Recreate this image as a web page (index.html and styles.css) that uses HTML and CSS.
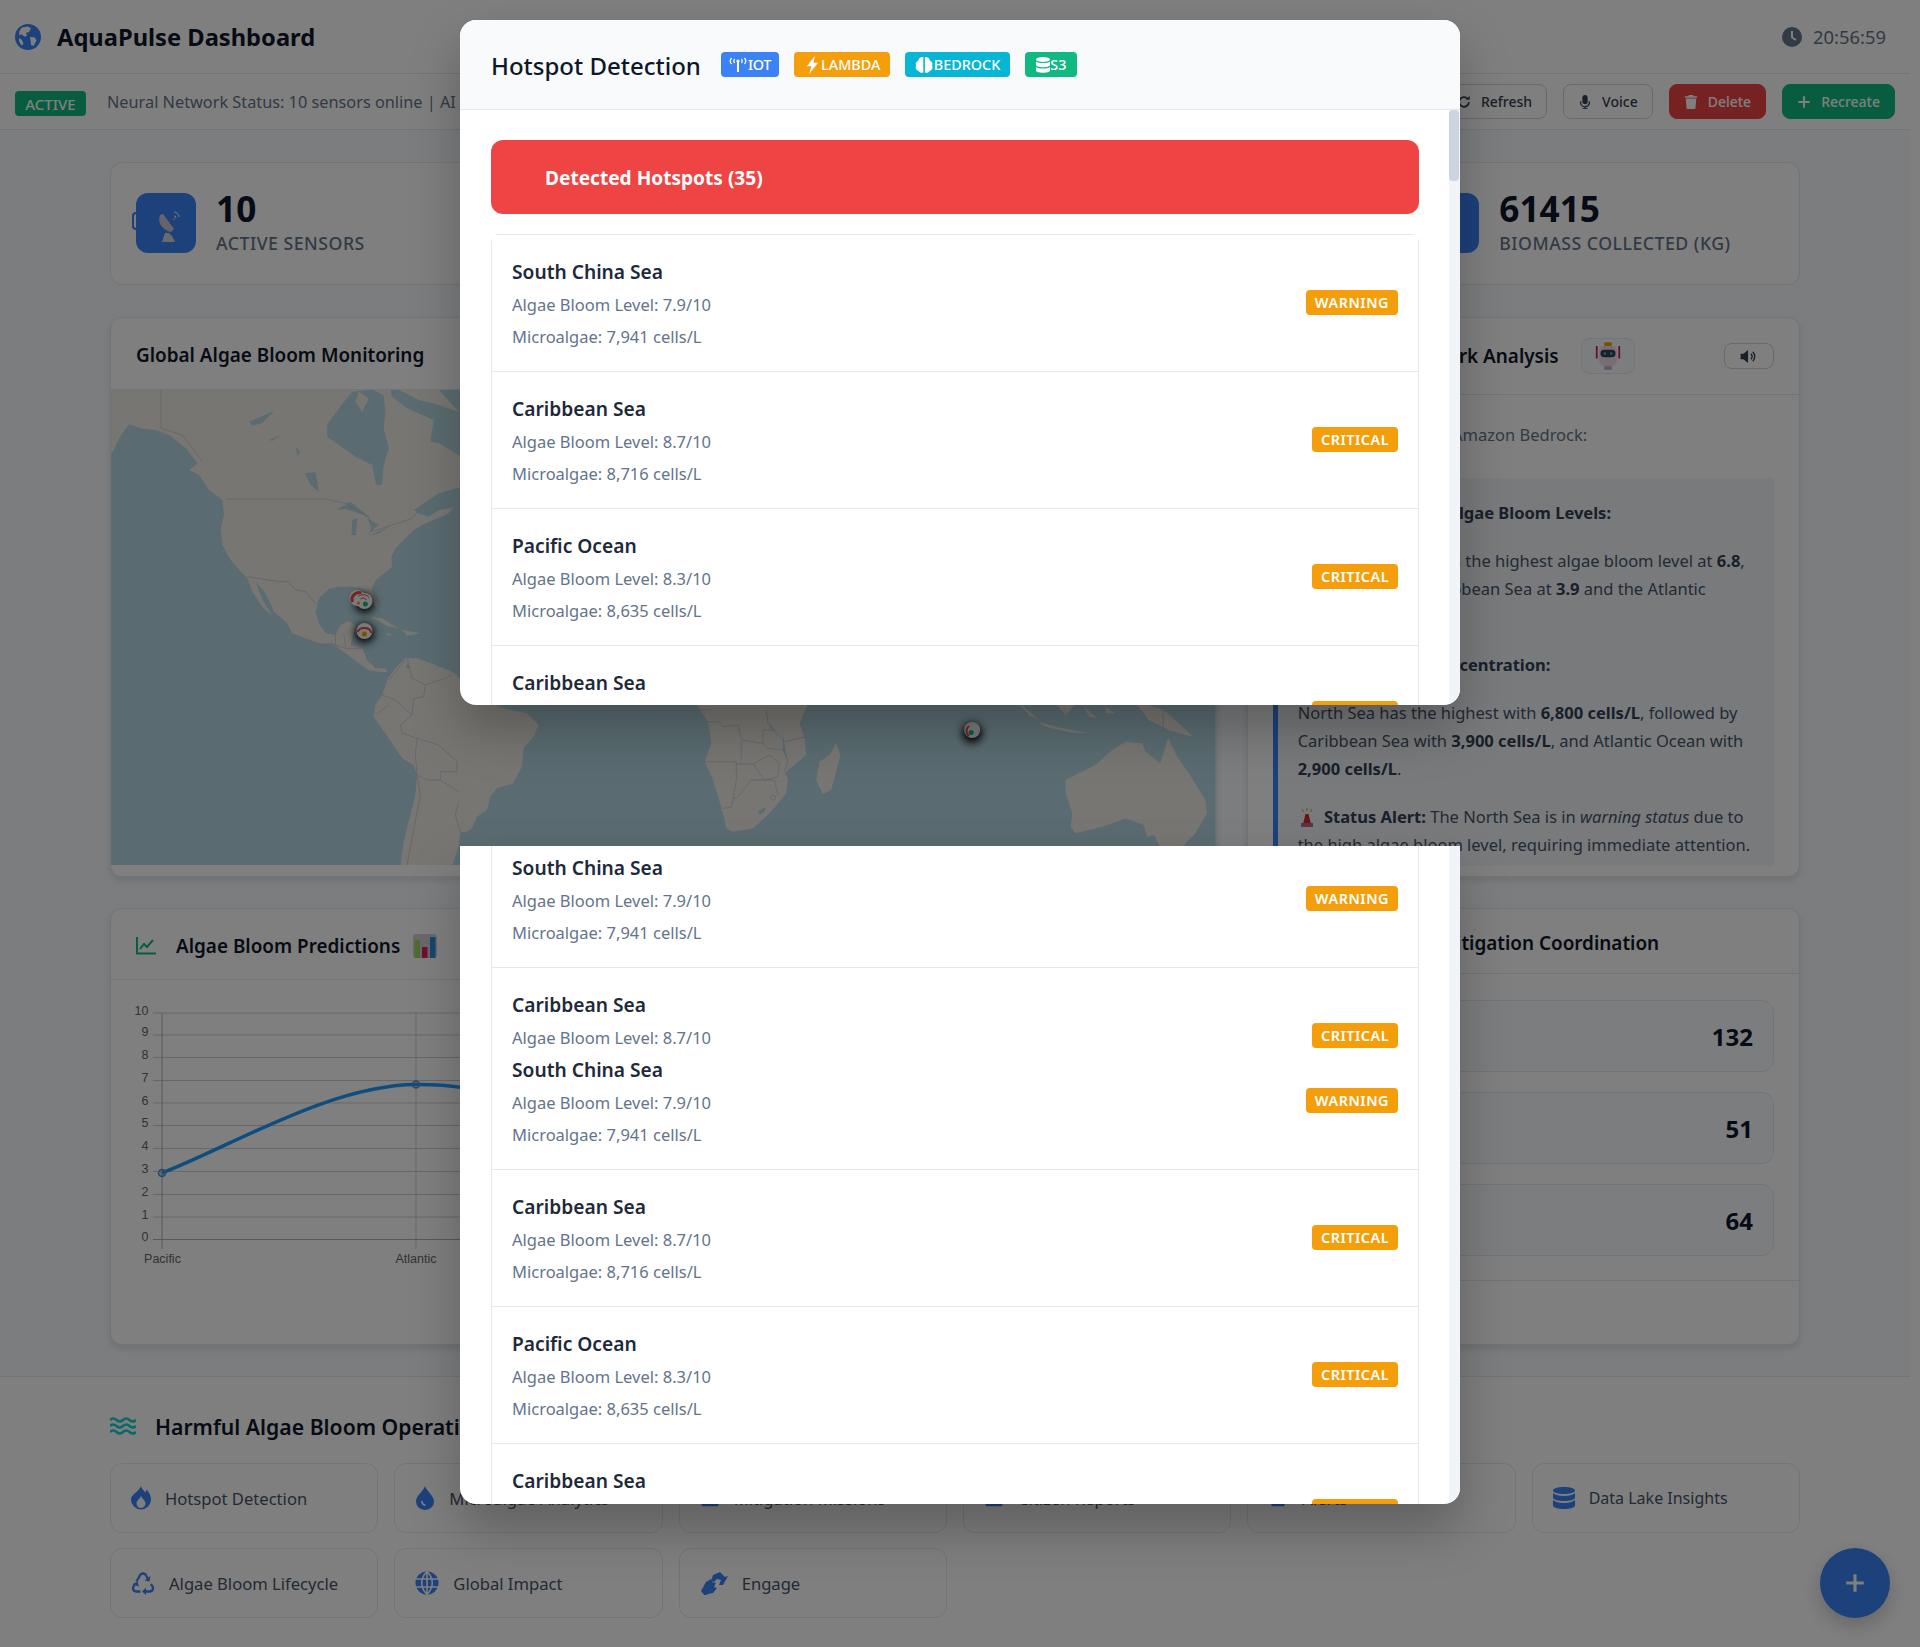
FILE: index.html
```html
<!DOCTYPE html>
<html lang="en">
<head>
<meta charset="utf-8">
<title>AquaPulse Dashboard</title>
<link rel="stylesheet" href="styles.css">
</head>
<body>
<div class="page">
  <header class="topbar">
    <div class="brand">
      <svg class="brand-icon" viewBox="0 0 26 26"><circle cx="13" cy="13" r="13" fill="#3b82f6"/><path d="M7 3.500l6-1 3 2-2 3.500-3 1 1 3-3 .5-2-2-3 .5 .5-4zM15 13l5 .5 1.500 3-3 5.500-2.500-1-.5-4.500zM4 14l3 2 1.500 4-2 1.500-2.500-4z" fill="#fff"/></svg>
      <h1>AquaPulse Dashboard</h1>
    </div>
    <div class="clock">
      <svg class="clock-icon" viewBox="0 0 20 20"><circle cx="10" cy="10" r="10" fill="#64748b"/><path d="M10 4v6.500l4 2.500" fill="none" stroke="#fff" stroke-width="2"/></svg>
      <span>20:56:59</span>
    </div>
  </header>

  <div class="statusbar">
    <span class="pill">ACTIVE</span>
    <span class="status-text">Neural Network Status: 10 sensors online | AI Analysis Active</span>
    <div class="actions">
      <button class="btn"><svg class="ico14" viewBox="0 0 16 16"><path d="M13.500 8a5.500 5.500 0 1 1-1.700-4" fill="none" stroke="#334155" stroke-width="2"/><path d="M14.500 1v4.500H10z" fill="#334155"/></svg>Refresh</button>
      <button class="btn"><svg class="ico14" viewBox="0 0 16 16"><rect x="5" y="0" width="6" height="10.500" rx="3" fill="#334155"/><path d="M3 7v1.500a5 5 0 0 0 10 0V7M8 13.500V16M5 16h6" fill="none" stroke="#334155" stroke-width="1.500"/></svg>Voice</button>
      <button class="btn btn-red"><svg class="ico14" viewBox="0 0 16 16"><path d="M5.500 0h5l.5 1.500h4V3H1V1.500h4zM2 4h12l-1 12H3z" fill="#fff"/></svg>Delete</button>
      <button class="btn btn-green"><svg class="ico14" viewBox="0 0 16 16"><path d="M8 1.500v13M1.500 8h13" stroke="#fff" stroke-width="2.200"/></svg>Recreate</button>
    </div>
  </div>

  <main class="main">
    <section class="stats">
      <div class="stat">
        <div class="stat-icon stat-icon-first">
          <svg viewBox="0 0 30 36" class="dish"><path d="M5 6c-3 7 2 15 11 17l3-3L8 5z" fill="#cfc7d6"/><path d="M10 24l-3 9h13l-3-6-3-3z" fill="#d8d2dc"/><path d="M19 3a5 5 0 0 1 5 5M19 7a2 2 0 0 1 2 2" fill="none" stroke="#fff" stroke-width="1"/><circle cx="19" cy="10" r="1.500" fill="#94a3b8"/></svg>
        </div>
        <div class="stat-text"><div class="stat-value">10</div><div class="stat-label">Active Sensors</div></div>
      </div>
      <div class="stat">
        <div class="stat-icon"></div>
        <div class="stat-text"><div class="stat-value">7.2</div><div class="stat-label">Avg Bloom Level</div></div>
      </div>
      <div class="stat">
        <div class="stat-icon"></div>
        <div class="stat-text"><div class="stat-value">35</div><div class="stat-label">Hotspots</div></div>
      </div>
      <div class="stat">
        <div class="stat-icon"></div>
        <div class="stat-text"><div class="stat-value">61415</div><div class="stat-label">Biomass Collected (kg)</div></div>
      </div>
    </section>

    <section class="grid-row row-top">
      <article class="card">
        <div class="card-head head-map"><h2>Global Algae Bloom Monitoring</h2></div>
        <svg class="map" viewBox="110 390 1107 475" preserveAspectRatio="none">
          <defs>
            <filter id="mk" x="-100%" y="-100%" width="300%" height="300%"><feGaussianBlur stdDeviation="4"/></filter>
          </defs>
          <rect x="110" y="390" width="1107" height="475" fill="#b5d8e2"/>
          <g transform="translate(105 385) scale(.33333)">
            <path class="land" d="M15 14L1070 14L1070 300L1050 360L1030 385L985 405L950 420L925 435L900 460L870 490L858 515L860 545L830 570L810 585L798 615L815 650L815 668L800 655L785 625L770 610L740 605L700 605L670 612L640 640L630 680L640 715L660 745L690 750L705 720L730 708L750 722L735 780L770 790L785 825L810 850L840 850L845 862L820 860L790 855L760 835L720 805L680 775L640 775L600 760L560 745L545 715L505 680L480 625L450 590L468 640L500 692L470 665L440 620L425 580L405 560L375 525L350 480L345 430L355 390L350 345L310 315L280 270L250 255L275 235L240 190L190 150L150 135L105 130L70 118L45 150L20 200L15 205Z"/>
            <path class="water" d="M740 20L800 14L835 30L840 80L835 130L850 190L835 240L830 300L812 300L800 240L750 215L700 180L665 155L665 120L700 70Z"/>
            <path class="water" d="M855 14L1070 14L1070 215L1000 175L975 170L985 105L950 90L905 70L860 35Z"/>
            <path class="land" d="M880 14L1000 14L1060 80L1000 60L940 45ZM760 20L790 40L770 80L750 50Z"/>
            <path class="water" d="M925 375L1000 325L1070 305L1065 360L1035 370L1000 375L970 395L940 385Z"/>
            <path class="water" d="M430 110L465 95L505 78L470 115L440 122ZM490 165L525 150L500 168ZM570 185L585 200L575 212ZM598 265L630 262L640 320L615 300ZM690 375L735 350L770 378L795 400L760 385L720 372ZM740 405L755 400L752 450L738 450ZM785 400L820 420L795 440L785 455L800 425ZM790 452L850 425L860 420L820 445Z"/>
            <path class="land" d="M795 697L830 700L880 730L850 725L815 705ZM890 735L945 745L905 752ZM845 745L865 750L845 752Z"/>
            <path class="land" d="M848 880L870 850L900 820L935 820L990 840L1040 860L1070 885L1100 930L1195 970L1265 985L1300 1020L1285 1055L1255 1090L1250 1145L1225 1195L1175 1210L1155 1235L1145 1275L1115 1295L1100 1330L1085 1340L1065 1340L1060 1385L1040 1445L885 1445L895 1370L915 1290L930 1230L935 1170L925 1140L890 1120L850 1060L805 995L810 960L830 930Z"/>
            <path class="water" d="M905 835L915 850L902 850Z"/>
            <path class="border" d="M165 14V130L230 150L290 230M360 342H660L720 355L790 395L800 440L860 420L920 400L945 370M425 575L520 590L550 590L570 615L600 620L632 658M690 750L690 780L720 790L770 790M715 745L720 785M850 885L900 825M905 820L920 880L960 900L1020 880L1040 870M960 900L955 935L925 940L920 990L885 1020L890 1045L935 1060L930 1110L935 1170L965 1185L1005 1185L1060 1220M935 1170L945 1230L905 1440M830 930L870 945L920 990M810 990L850 960M935 1060L1000 1080L1055 1130L1055 1160L1005 1160L1005 1185M1060 1250L1050 1290L1065 1340"/>
            <path class="faint" d="M18 945H820"/>
          </g>
          <g transform="translate(460 700) scale(.33333)">
            <path class="land" d="M700 0L745 65L755 130L735 185L760 240L790 340L800 385L820 395L880 385L930 340L980 280L985 235L975 220L1040 165L1035 115L1020 70L1050 0Z"/>
            <path class="land" d="M1130 130L1143 165L1115 270L1090 282L1070 240L1080 185L1110 165Z"/>
            <path class="border" d="M735 185H830V240L820 295L830 295L875 240L915 240L945 240L955 285M830 192L880 192L915 240L955 230L960 190L930 165L880 192M845 125V185M745 65H780L790 80L835 75L845 120L910 130L925 145L970 150L985 180L975 215M910 130V90L940 90L975 125L1040 110M920 30L925 70L945 90M790 325L815 322L820 295M720 30H760"/>
            <path class="water" d="M920 45L928 70L950 95L932 85ZM970 100L978 150L985 180L970 150ZM895 335L918 320L915 335L900 345Z"/>
            <circle class="border" cx="941" cy="293" r="7"/>
          </g>
          <g transform="translate(850 700) scale(.33333)">
            <path class="land" d="M650 240L690 220L740 195L790 150L830 125L880 130L890 155L935 190L958 115L985 170L1020 220L1070 300L1075 340L1040 400L1000 440L935 440L915 405L895 410L885 375L830 355L760 380L680 400L665 380L670 340L650 280Z"/>
            <path class="land" d="M565 65L640 85L720 100L660 97L590 80ZM500 0L570 60L540 45ZM610 0H690L650 45ZM705 20L745 55L720 50ZM770 20L800 40H770ZM850 0L945 30L1035 112L960 90L900 60L870 20Z"/>
            <path class="border" d="M943 28V95"/>
          </g>
          <g>
            <circle class="mk-shadow" cx="364" cy="603" r="10" filter="url(#mk)"/>
            <circle class="mk" cx="357" cy="598" r="8"/>
            <path class="mk-arc" d="M352 602a7 7 0 0 1 9-9" stroke-width="3"/>
            <circle class="mk" cx="364" cy="601" r="8"/>
            <path class="mk-arc" d="M358 596a8 8 0 0 1 11 2M360 599a4 4 0 0 1 6 1" stroke-width="1"/>
            <circle cx="365" cy="604" r="2.500" fill="#10b981"/>
            <circle cx="358" cy="603" r="1.500" fill="#f59e0b"/>

            <circle class="mk-shadow" cx="364" cy="633" r="10" filter="url(#mk)"/>
            <circle class="mk" cx="364" cy="631" r="8"/>
            <path class="mk-arc" d="M357 632a7 7 0 0 1 7-4a7 7 0 0 1 7 5" stroke-width="2"/>
            <circle cx="364" cy="634" r="2.500" fill="#f59e0b"/>

            <circle class="mk-shadow" cx="973" cy="733" r="10" filter="url(#mk)"/>
            <circle class="mk" cx="973" cy="730" r="8"/>
            <path class="mk-arc" d="M970 726a6 6 0 0 0 0 10" stroke-width="2"/>
            <circle cx="972" cy="732.500" r="2.500" fill="#10b981"/>
          </g>
        </svg>
      </article>

      <article class="card">
        <div class="card-head head-ai">
          <svg class="ico22 ico-ai" viewBox="0 0 24 24"><circle cx="12" cy="12" r="10" fill="#3b82f6"/></svg>
          <h2>Neural Network Analysis</h2>
          <span class="robot">
            <svg viewBox="0 0 24 24"><path d="M3 4v10M21 4v10" stroke="#e11d48" stroke-width="1.500"/><rect x="9" y="1" width="6" height="3" fill="#f59e0b"/><rect x="5" y="4" width="14" height="16" rx="4" fill="#efdde8"/><rect x="6" y="7" width="12" height="6" rx="3" fill="#334155"/><circle cx="9.500" cy="10" r="1" fill="#38bdf8"/><circle cx="14.500" cy="10" r="1" fill="#38bdf8"/><rect x="9" y="20" width="6" height="3" fill="#c9a8bc"/></svg>
          </span>
          <button class="sound"><svg viewBox="0 0 20 16"><path d="M1 5h3l5-4v14l-5-4H1z" fill="#334155"/><path d="M12 5a4 4 0 0 1 0 6M14 3a7 7 0 0 1 0 10" fill="none" stroke="#334155" stroke-width="1.500"/></svg></button>
        </div>
        <div class="ai-body">
          <p class="ai-intro">Latest AI analysis from Amazon Bedrock:</p>
          <div class="ai-panel">
            <p><strong>Highest Recorded Algae Bloom Levels:</strong></p>
            <p>The North Sea shows the highest algae bloom level at <strong>6.8</strong>, followed by the Caribbean Sea at <strong>3.9</strong> and the Atlantic Ocean at <strong>2.9</strong>.</p>
            <p><strong>Microalgae Cell Concentration:</strong></p>
            <p>North Sea has the highest with <strong>6,800 cells/L</strong>, followed by Caribbean Sea with <strong>3,900 cells/L</strong>, and Atlantic Ocean with <strong>2,900 cells/L</strong>.</p>
            <p><svg class="siren" viewBox="0 0 18 20"><path d="M5 17L7.500 7h3L13 17z" fill="#dc2626"/><rect x="3" y="16" width="12" height="4" fill="#b56a8a"/><path d="M9 1v3M4 2l1.500 3M14 2l-1.500 3" stroke="#e9b949" stroke-width="1.200"/></svg> <strong>Status Alert:</strong> The North Sea is in <em>warning status</em> due to the high algae bloom level, requiring immediate attention.</p>
          </div>
        </div>
      </article>
    </section>

    <section class="grid-row row-bottom">
      <article class="card">
        <div class="card-head head-chart">
          <svg class="ico-chartline" viewBox="0 0 20 18"><path d="M1 0v16.500h19" fill="none" stroke="#10b981" stroke-width="2"/><path d="M4 12l4-5 3 3 6-7" fill="none" stroke="#10b981" stroke-width="2"/></svg>
          <h2>Algae Bloom Predictions</h2>
          <svg class="ico-bars" viewBox="0 0 24 24"><rect width="24" height="24" rx="3" fill="#d4d0d8"/><rect x="1.500" y="6" width="5.500" height="18" fill="#a3d45f"/><rect x="9" y="13" width="5.500" height="11" fill="#e11d63"/><rect x="17" y="3" width="5.500" height="21" fill="#2b8fd8"/></svg>
        </div>
        <svg class="chart" viewBox="111 979 1105 365">
          <g class="grid">
            <path d="M153 1012H1190M153 1034H1190M153 1056.500H1190M153 1079.500H1190M153 1102H1190M153 1124.500H1190M153 1147.500H1190M153 1170.500H1190M153 1193.500H1190M153 1216H1190"/>
            <path d="M416 1012V1248M670 1012V1248M924 1012V1248M1178 1012V1248"/>
            <path class="axis" d="M162 1012V1248M153 1238.500H1190"/>
          </g>
          <path class="curve" d="M162 1172C230 1146 330 1084 416 1083.500C470 1083.200 520 1096 560 1120"/>
          <circle class="pt" cx="162" cy="1172" r="3.500"/>
          <circle class="pt" cx="416" cy="1083.500" r="3.500"/>
          <g class="ylab">
            <text x="148.500" y="1014">10</text><text x="148.500" y="1035">9</text><text x="148.500" y="1058">8</text><text x="148.500" y="1081">7</text><text x="148.500" y="1103.500">6</text><text x="148.500" y="1126">5</text><text x="148.500" y="1149">4</text><text x="148.500" y="1172">3</text><text x="148.500" y="1195">2</text><text x="148.500" y="1217.500">1</text><text x="148.500" y="1240">0</text>
          </g>
          <g class="xlab"><text x="162.500" y="1262">Pacific</text><text x="416" y="1262">Atlantic</text></g>
        </svg>
      </article>

      <article class="card">
        <div class="card-head head-mit">
          <svg class="ico22 ico-mit" viewBox="0 0 24 24"><circle cx="12" cy="12" r="10" fill="#10b981"/></svg>
          <h2>Global Mitigation Coordination</h2>
        </div>
        <div class="mit-body">
          <div class="mit-row"><span>Active Missions</span><strong>132</strong></div>
          <div class="mit-row"><span>Drones Deployed</span><strong>51</strong></div>
          <div class="mit-row"><span>Areas Cleared</span><strong>64</strong></div>
        </div>
        <div class="mit-foot"></div>
      </article>
    </section>
  </main>

  <section class="ops">
    <h2 class="ops-title">
      <svg class="ico-water" viewBox="0 0 26 18"><path d="M0 3q3.200-3 6.500 0t6.500 0 6.500 0 6.500 0M0 9q3.200-3 6.500 0t6.500 0 6.500 0 6.500 0M0 15q3.200-3 6.500 0t6.500 0 6.500 0 6.500 0" fill="none" stroke="#18d0d0" stroke-width="2.600"/></svg>
      Harmful Algae Bloom Operations
    </h2>
    <div class="ops-grid">
      <a class="op"><svg class="op-ico" viewBox="0 0 20 24"><path fill-rule="evenodd" d="M10 0c.800 3.500 3 4.500 4.500 6.500.700-1 1-2 1-3 2.500 2.500 4.500 6 4.500 10a10 10 0 0 1-20 0C0 8 8 6 10 0zM10 10c-1 3-4.500 4-4.500 7.500a4.500 4.500 0 0 0 9 0C14.500 14 11 13 10 10z" fill="#3b82f6"/></svg>Hotspot Detection</a>
      <a class="op"><svg class="op-ico" viewBox="0 0 20 24"><path fill-rule="evenodd" d="M10 0c2 6 9 9.500 9 15.500a9 8.500 0 0 1-18 0C1 9.500 8 6 10 0zM6 15a5 5 0 0 0 4.500 5v-1.800A3 3 0 0 1 7.800 15z" fill="#3b82f6"/></svg>Microalgae Analytics</a>
      <a class="op"><svg class="op-ico" viewBox="0 0 24 24"><rect x="2" y="6" width="20" height="16" rx="2" fill="#3b82f6"/></svg>Mitigation Missions</a>
      <a class="op"><svg class="op-ico" viewBox="0 0 24 24"><rect x="2" y="6" width="20" height="16" rx="2" fill="#3b82f6"/></svg>Citizen Reports</a>
      <a class="op"><svg class="op-ico" viewBox="0 0 24 24"><rect x="4" y="6" width="16" height="16" rx="2" fill="#3b82f6"/></svg>Alerts</a>
      <a class="op op-tight"><svg class="op-ico op-db" viewBox="0 0 22 22"><path d="M11 0c6 0 11 1.500 11 3.500S17 7 11 7 0 5.500 0 3.500 5 0 11 0zM0 6c2 2 6 3 11 3s9-1 11-3v4.500c0 2-5 3.500-11 3.500S0 12.500 0 10.500zM0 13c2 2 6 3 11 3s9-1 11-3v5.500c0 2-5 3.500-11 3.500S0 20.500 0 18.500z" fill="#3b82f6"/></svg>Data Lake Insights</a>
      <a class="op"><svg class="op-ico op-rec" viewBox="0 0 24 24"><path d="M5.500 10.500L9.500 3.500Q12 1.500 14.500 3.500L17 8M20 13L22 16.500Q22.500 20 19 20.500H14M9.500 20.500H5Q1.500 20 2 16.500L4.500 12" fill="none" stroke="#3b82f6" stroke-width="2.300"/><path d="M19.500 5L18.500 10.500L13.500 9.500zM15 16.800L11 20.500L15 24zM1.500 13.500L6.500 10.500L8 15.500z" fill="#3b82f6"/></svg>Algae Bloom Lifecycle</a>
      <a class="op"><svg class="op-ico op-globe" viewBox="0 0 24 24"><circle cx="12" cy="12" r="11.500" fill="#3b82f6"/><path d="M0 8h24M0 16h24M12 0v24M12 .5c-7 7-7 16 0 23M12 .5c7 7 7 16 0 23" fill="none" stroke="#fff" stroke-width="1.600"/></svg>Global Impact</a>
      <a class="op"><svg class="op-ico op-hand" viewBox="0 0 28 24"><path d="M13 4l7-3 5 5 3-1-5 9h-4l2-5-4-1-3 3-3-1zM1 20l5-9 5-3 1 3 4 1-2 4 3 1-4 5-5 1-3 2z" fill="#3b82f6"/></svg>Engage</a>
    </div>
  </section>
</div>

<button class="fab"><svg viewBox="0 0 20 20"><path d="M10 2v16M2 10h16" stroke="#fff" stroke-width="2.800"/></svg></button>

<div class="overlay"></div>

<div class="modal modal-top">
  <div class="modal-head">
    <h3>Hotspot Detection</h3>
    <span class="tag tag-iot"><svg viewBox="0 0 20 14"><path d="M10 3v11" stroke="#fff" stroke-width="2"/><circle cx="10" cy="3" r="1.600" fill="#fff"/><path d="M6.500 1q-1.500 2 0 4M3.500 0q-2.500 3 0 6M13.500 1q1.500 2 0 4M16.500 0q2.500 3 0 6" fill="none" stroke="#fff" stroke-width="1.300"/></svg>IOT</span>
    <span class="tag tag-lambda"><svg viewBox="0 0 12 16"><path d="M8 0L1 9h4l-2 7 8-10H7z" fill="#fff"/></svg>LAMBDA</span>
    <span class="tag tag-bedrock"><svg viewBox="0 0 16 14"><path d="M7.300 0C4 0 3 2 3 3 1 4 0 5.500 1 7.500 0 9 1 12 3 12c1 2 3 2 4.300 1.500zM8.700 0c3.300 0 4.300 2 4.300 3 2 1 3 2.500 2 4.500 1 1.500 0 4.500-2 4.500-1 2-3 2-4.300 1.500z" fill="#fff"/></svg>BEDROCK</span>
    <span class="tag tag-s3"><svg viewBox="0 0 14 16"><ellipse cx="7" cy="2.500" rx="7" ry="2.500" fill="#fff"/><path d="M0 4.500c2 2 12 2 14 0v3.500c0 3-14 3-14 0zM0 10c2 2 12 2 14 0v3.500c0 3-14 3-14 0z" fill="#fff"/></svg>S3</span>
  </div>
  <div class="modal-body">
    <div class="banner">Detected Hotspots (35)</div>
    <div class="list list-full">
      <div class="item"><div><div class="item-name">South China Sea</div><div class="item-line">Algae Bloom Level: 7.9/10</div><div class="item-line">Microalgae: 7,941 cells/L</div></div><span class="badge">WARNING</span></div>
      <div class="item"><div><div class="item-name">Caribbean Sea</div><div class="item-line">Algae Bloom Level: 8.7/10</div><div class="item-line">Microalgae: 8,716 cells/L</div></div><span class="badge">CRITICAL</span></div>
      <div class="item"><div><div class="item-name">Pacific Ocean</div><div class="item-line">Algae Bloom Level: 8.3/10</div><div class="item-line">Microalgae: 8,635 cells/L</div></div><span class="badge">CRITICAL</span></div>
      <div class="item"><div><div class="item-name">Caribbean Sea</div><div class="item-line">Algae Bloom Level: 8.4/10</div><div class="item-line">Microalgae: 8,120 cells/L</div></div><span class="badge">CRITICAL</span></div>
    </div>
  </div>
  <div class="thumb"></div>
</div>

<div class="modal modal-low">
  <div class="low-body">
    <div class="list">
      <div class="item item-first"><div><div class="item-name">South China Sea</div><div class="item-line">Algae Bloom Level: 7.9/10</div><div class="item-line">Microalgae: 7,941 cells/L</div></div><span class="badge">WARNING</span></div>
      <div class="clip-a"><div class="item"><div><div class="item-name">Caribbean Sea</div><div class="item-line">Algae Bloom Level: 8.7/10</div><div class="item-line">Microalgae: 8,716 cells/L</div></div><span class="badge">CRITICAL</span></div></div>
      <div class="clip-b"><div class="item"><div><div class="item-name">South China Sea</div><div class="item-line">Algae Bloom Level: 7.9/10</div><div class="item-line">Microalgae: 7,941 cells/L</div></div><span class="badge">WARNING</span></div></div>
      <div class="item"><div><div class="item-name">Caribbean Sea</div><div class="item-line">Algae Bloom Level: 8.7/10</div><div class="item-line">Microalgae: 8,716 cells/L</div></div><span class="badge">CRITICAL</span></div>
      <div class="item"><div><div class="item-name">Pacific Ocean</div><div class="item-line">Algae Bloom Level: 8.3/10</div><div class="item-line">Microalgae: 8,635 cells/L</div></div><span class="badge">CRITICAL</span></div>
      <div class="item"><div><div class="item-name">Caribbean Sea</div><div class="item-line">Algae Bloom Level: 8.4/10</div><div class="item-line">Microalgae: 8,120 cells/L</div></div><span class="badge">CRITICAL</span></div>
    </div>
  </div>
</div>
</body>
</html>
```

FILE: styles.css
```css
* { box-sizing: border-box; }
html, body { margin: 0; padding: 0; }
body {
  width: 1920px;
  height: 1647px;
  overflow: hidden;
  position: relative;
  background: #ffffff;
  font-family: "Noto Sans", "Open Sans", sans-serif;
  color: #1e293b;
  font-size: 16px;
}
h1, h2, h3, p { margin: 0; }
svg { display: block; flex: none; }

.page { width: 1910px; background: #f8fafc; }

.topbar {
  height: 74px;
  background: #ffffff;
  border-bottom: 1px solid #e2e8f0;
  display: flex;
  align-items: center;
  justify-content: space-between;
  padding: 0 24px 0 15px;
}
.brand { display: flex; align-items: center; gap: 16px; }
.brand-icon { width: 26px; height: 26px; }
.brand h1 { font-size: 23.700px; font-weight: 700; color: #0f172a; }
.clock { display: flex; align-items: center; gap: 11px; color: #64748b; font-size: 18.400px; }
.clock-icon { width: 20px; height: 20px; }

.statusbar {
  height: 56px;
  background: #fff;
  border-bottom: 1px solid #e2e8f0;
  display: flex;
  align-items: center;
  padding: 0 15px;
}
.pill {
  height: 25px;
  width: 71px;
  margin-top: 4px;
  border-radius: 4px;
  background: #10b981;
  color: #fff;
  font-size: 15px;
  font-weight: 500;
  display: flex;
  align-items: center;
  justify-content: center;
}
.status-text { margin-left: 21px; color: #64748b; font-size: 16.300px; }
.actions { margin-left: auto; display: flex; gap: 16px; }
.btn {
  height: 35px;
  padding: 0 14px;
  display: flex;
  align-items: center;
  gap: 10px;
  background: #fff;
  border: 1px solid #cbd5e1;
  border-radius: 8px;
  font: 500 14px "Noto Sans", sans-serif;
  color: #334155;
}
.btn-red { background: #ef4444; border-color: #ef4444; color: #fff; }
.btn-green { background: #10b981; border-color: #10b981; color: #fff; }
.ico14 { width: 14px; height: 14px; }

.main { padding: 32px 110px 31px; }
.stats { display: grid; grid-template-columns: repeat(4, 1fr); gap: 21px; margin-bottom: 32px; }
.stat {
  height: 123px;
  background: #fff;
  border: 1px solid #e2e8f0;
  border-radius: 12px;
  display: flex;
  align-items: center;
  gap: 20px;
  padding: 0 25px;
}
.stat-icon { width: 60px; height: 60px; border-radius: 12px; background: #3b82f6; display: flex; align-items: center; justify-content: center; position: relative; margin-bottom: 2px; }
.stat-icon-first::before { content: ""; position: absolute; left: -4px; top: 19px; width: 4px; height: 14px; border: 2px solid #3b82f6; border-right: 0; border-radius: 4px 0 0 4px; }
.dish { width: 30px; height: 36px; margin: 8px 0 0 8px; }
.stat-text { margin-bottom: 7px; }
.stat-value { font-size: 35.200px; font-weight: 700; line-height: 44px; color: #0f172a; }
.stat-label { font-size: 17.700px; font-weight: 500; color: #64748b; text-transform: uppercase; letter-spacing: .5px; line-height: 24px; margin-top: 1px; }

.grid-row { display: grid; grid-template-columns: 2fr 1fr; gap: 30px; }
.row-top { height: 560px; margin-bottom: 31px; }
.row-bottom { height: 437px; }
.card {
  background: #fff;
  border: 1px solid #e2e8f0;
  border-radius: 12px;
  box-shadow: 0 4px 6px rgba(0,0,0,.1);
  overflow: hidden;
  display: flex;
  flex-direction: column;
  min-width: 0;
}
.card-head { display: flex; align-items: center; border-bottom: 1px solid #e2e8f0; padding: 0 25px; flex: none; }
.card-head h2 { font-size: 18.900px; font-weight: 600; color: #0f172a; }
.head-map { height: 72px; padding-top: 2px; }
.head-ai { height: 77px; gap: 16px; }
.head-chart { height: 71px; padding-top: 4px; }
.head-mit { height: 65px; gap: 16px; padding-top: 3px; }
.ico22 { width: 22px; height: 22px; }
.ico-ai { margin-right: 20px; }
.ico-mit { margin-right: 64px; }
.ico-chartline { width: 20px; height: 18px; margin-right: 20px; }
.ico-bars { width: 24px; height: 24px; margin-left: 13px; }

.map { width: 100%; height: 475px; flex: none; }
.land { fill: #f1ede5; }
.water { fill: #b5d8e2; }
.border { fill: none; stroke: #c6b9cf; stroke-width: 2; }
.faint { fill: none; stroke: #c3e0e8; stroke-width: 2; }
.mk { fill: #f2f2f2; }
.mk-shadow { fill: #000; }
.mk-arc { fill: none; stroke: #ef4444; }

.robot { width: 54px; height: 36px; border: 1px solid #e2e8f0; border-radius: 8px; background: #f8fafc; display: flex; align-items: center; justify-content: center; margin-left: 6px; }
.robot svg { width: 30px; height: 32px; }
.sound { margin-left: auto; width: 50px; height: 26px; border: 1px solid #cbd5e1; border-radius: 8px; background: #fff; display: flex; align-items: center; justify-content: center; padding: 0; }
.sound svg { width: 20px; height: 15px; }
.ai-body { padding: 26px 25px 0; line-height: 28px; color: #475569; font-size: 16.500px; }
.ai-intro { color: #64748b; margin-bottom: 29px; }
.ai-panel { height: 388px; overflow: hidden; background: #f1f5f9; border-left: 5px solid #3b82f6; border-radius: 8px 0 0 8px; padding: 21px 20px 0 20px; }
.ai-panel p { margin-bottom: 20px; }
.ai-panel strong { font-weight: 700; color: #334155; }
.siren { display: inline-block; width: 18px; height: 20px; vertical-align: -4px; margin-right: 4px; }

.chart { width: 1105px; height: 365px; }
.grid path { fill: none; stroke: #cfcfcf; stroke-width: 1; }
.grid .axis { stroke: #b0b0b0; }
.curve { fill: none; stroke: #1f9bff; stroke-width: 3.500; }
.pt { fill: rgba(90,150,220,.35); stroke: #5a8fd8; stroke-width: 1.500; }
.ylab text { font: 12.500px "Liberation Sans", sans-serif; fill: #666; text-anchor: end; }
.xlab text { font: 12.500px "Liberation Sans", sans-serif; fill: #666; text-anchor: middle; }

.mit-body { padding: 26px 25px 0; display: flex; flex-direction: column; gap: 20px; flex: 1; }
.mit-row { height: 72px; background: #f8fafc; border: 1px solid #e2e8f0; border-radius: 12px; display: flex; align-items: center; justify-content: space-between; padding: 0 20px; color: #475569; }
.mit-row strong { font-size: 24px; font-weight: 700; color: #0f172a; }
.mit-foot { height: 64px; border-top: 1px solid #e2e8f0; flex: none; }

.ops { border-top: 1px solid #e2e8f0; background: #fff; height: 271px; padding: 32px 110px 0; }
.ops-title { display: flex; align-items: center; gap: 19px; font-size: 21.200px; font-weight: 600; color: #0f172a; height: 34px; }
.ico-water { width: 26px; height: 18px; }
.ops-grid { display: grid; grid-template-columns: repeat(6, 1fr); gap: 15px 16px; margin-top: 20px; }
.op { height: 70px; border: 1px solid #e2e8f0; border-radius: 12px; background: #fff; display: flex; align-items: center; padding: 0 20px; gap: 14px; color: #475569; font-size: 16.600px; }
.op-tight { font-size: 16px; }
.op-ico { width: 20px; height: 24px; }
.op-db { width: 22px; height: 22px; }
.op-rec { width: 24px; height: 24px; }
.op-globe { width: 24px; height: 24px; }
.op-hand { width: 28px; height: 24px; }

.fab { position: absolute; left: 1820px; top: 1548px; width: 70px; height: 70px; border-radius: 50%; border: 0; background: #3b82f6; box-shadow: 0 8px 20px rgba(0,0,0,.2); display: flex; align-items: center; justify-content: center; padding: 0; }
.fab svg { width: 22px; height: 22px; }

.overlay { position: absolute; inset: 0; background: rgba(0,0,0,.5); }

.modal { position: absolute; left: 460px; width: 1000px; background: #fff; overflow: hidden; box-shadow: 0 25px 50px rgba(0,0,0,.25); }
.modal-top { top: 20px; height: 685px; border-radius: 16px; display: flex; flex-direction: column; }
.modal-head { height: 90px; flex: none; background: #f8fafc; border-bottom: 1px solid #e2e8f0; display: flex; align-items: center; padding: 0 31px; gap: 15px; }
.modal-head h3 { font-size: 24px; font-weight: 500; color: #0f172a; margin: 2px 5px 0 0; }
.tag { height: 25px; border-radius: 4px; color: #fff; font-size: 14.400px; font-weight: 500; display: flex; align-items: center; padding: 0 10px; }
.tag svg { height: 16px; width: auto; }
.tag-iot { padding: 0 8px 0 7px; letter-spacing: -.3px; }
.tag-iot svg { width: 20px; height: 16px; }
.tag-lambda svg { width: 17px; height: 18px; }
.tag-iot { background: #3b82f6; }
.tag-lambda { background: #f59e0b; }
.tag-bedrock { background: #06b6d4; }
.tag-s3 { background: #10b981; padding: 0 11px; }
.modal-body { flex: 1; padding: 30px 30px 0 31px; overflow: hidden; border-right: 11px solid #f1f5f9; }
.thumb { position: absolute; right: 1px; top: 90px; width: 10px; height: 71px; border-radius: 4px; background: #cbd5e1; }
.banner { height: 74px; background: #ef4444; border-radius: 12px; color: #fff; font-size: 19.100px; font-weight: 700; display: flex; align-items: center; padding: 2px 0 0 54px; margin-bottom: 20px; }
.list { border: 1px solid #e2e8f0; border-top: 0; border-bottom: 0; }
.list-full { border-top: 1px solid #e2e8f0; border-radius: 8px 8px 0 0; }
.item { height: 137px; border-bottom: 1px solid #e2e8f0; padding: 21px 20px 18px; display: flex; align-items: center; justify-content: space-between; background: #fff; }
.item-name { font-size: 19.200px; font-weight: 600; color: #1e293b; line-height: 30px; margin-bottom: 2px; }
.item-line { font-size: 16.500px; color: #64748b; line-height: 32px; }
.badge { height: 25px; border-radius: 4px; padding: 0 9px; background: #f59e0b; color: #fff; font-size: 14.400px; font-weight: 600; letter-spacing: .5px; display: flex; align-items: center; margin-bottom: 5px; }
.modal-low { top: 846px; height: 658px; border-radius: 0 0 16px 16px; }
.low-body { height: 100%; overflow: hidden; padding: 0 30px 0 31px; border-right: 11px solid #f1f5f9; }
.item-first { margin-top: -15px; }
.clip-a { height: 85px; overflow: hidden; }
.clip-b { height: 117px; overflow: hidden; }
.clip-b .item { margin-top: -20px; }
```
